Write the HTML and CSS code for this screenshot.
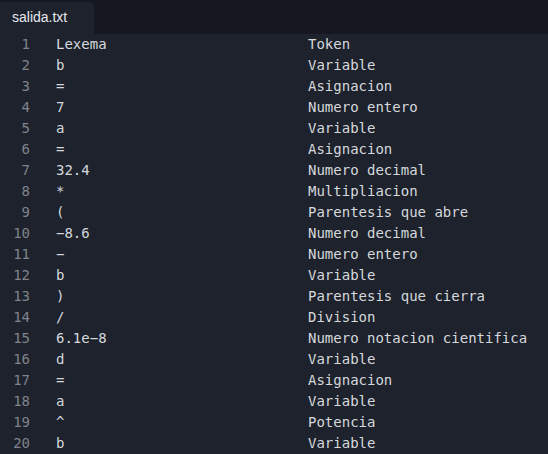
FILE: index.html
```html
<!DOCTYPE html>
<html>
<head>
<meta charset="utf-8">
<link rel="stylesheet" href="styles.css">
</head>
<body>
<div class="tabbar"><div class="tab">salida.txt</div></div>
<div class="editor">
<div class="row"><span class="ln">1</span><span class="lex">Lexema</span><span class="tok">Token</span></div>
<div class="row"><span class="ln">2</span><span class="lex">b</span><span class="tok">Variable</span></div>
<div class="row"><span class="ln">3</span><span class="lex">=</span><span class="tok">Asignacion</span></div>
<div class="row"><span class="ln">4</span><span class="lex">7</span><span class="tok">Numero entero</span></div>
<div class="row"><span class="ln">5</span><span class="lex">a</span><span class="tok">Variable</span></div>
<div class="row"><span class="ln">6</span><span class="lex">=</span><span class="tok">Asignacion</span></div>
<div class="row"><span class="ln">7</span><span class="lex">32.4</span><span class="tok">Numero decimal</span></div>
<div class="row"><span class="ln">8</span><span class="lex">*</span><span class="tok">Multipliacion</span></div>
<div class="row"><span class="ln">9</span><span class="lex">(</span><span class="tok">Parentesis que abre</span></div>
<div class="row"><span class="ln">10</span><span class="lex">−8.6</span><span class="tok">Numero decimal</span></div>
<div class="row"><span class="ln">11</span><span class="lex">−</span><span class="tok">Numero entero</span></div>
<div class="row"><span class="ln">12</span><span class="lex">b</span><span class="tok">Variable</span></div>
<div class="row"><span class="ln">13</span><span class="lex">)</span><span class="tok">Parentesis que cierra</span></div>
<div class="row"><span class="ln">14</span><span class="lex">/</span><span class="tok">Division</span></div>
<div class="row"><span class="ln">15</span><span class="lex">6.1e−8</span><span class="tok">Numero notacion cientifica</span></div>
<div class="row"><span class="ln">16</span><span class="lex">d</span><span class="tok">Variable</span></div>
<div class="row"><span class="ln">17</span><span class="lex">=</span><span class="tok">Asignacion</span></div>
<div class="row"><span class="ln">18</span><span class="lex">a</span><span class="tok">Variable</span></div>
<div class="row"><span class="ln">19</span><span class="lex">^</span><span class="tok">Potencia</span></div>
<div class="row"><span class="ln">20</span><span class="lex">b</span><span class="tok">Variable</span></div>
</div>
</body>
</html>
```
FILE: styles.css
```css
html, body {
  margin: 0;
  padding: 0;
  background: #1d222c;
  overflow: hidden;
}
.tabbar {
  background: #151821;
  height: 34px;
  padding-top: 2px;
  box-sizing: border-box;
  display: flex;
}
.tab {
  width: 94px;
  background: #1d222c;
  border-radius: 0 5px 0 0;
  font-family: "Liberation Sans", Arial, sans-serif;
  font-size: 14px;
  color: #e6e8ec;
  padding-left: 12px;
  box-sizing: border-box;
  line-height: 30px;
}
.editor {
  font-family: "DejaVu Sans Mono", monospace;
  font-size: 14px;
  color: #d6d8dc;
}
.row {
  display: flex;
  height: 21px;
  line-height: 21px;
  white-space: pre;
}
.ln {
  width: 30px;
  text-align: right;
  color: #80838b;
}
.lex {
  margin-left: 26px;
  width: 252px;
}
.tok {
}
```
